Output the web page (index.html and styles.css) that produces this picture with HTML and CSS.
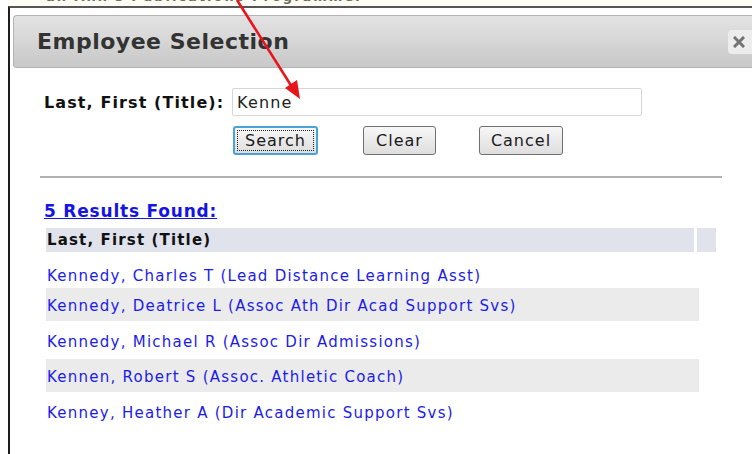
FILE: index.html
```html
<!DOCTYPE html>
<html>
<head>
<meta charset="utf-8">
<link rel="stylesheet" href="styles.css">
<title>Employee Selection</title>
</head>
<body>
<div class="backdrop-strip"><span>an Ann's Publications Programmer</span></div>
<div class="dialog">
  <div class="titlebar">
    <span class="title">Employee Selection</span>
    <span class="close" title="Close">
      <svg width="12" height="12" viewBox="0 0 12 12"><path d="M2 2 L10 10 M10 2 L2 10" stroke="#737373" stroke-width="3" stroke-linecap="square"/></svg>
    </span>
  </div>
  <div class="body">
    <div class="search-row">
      <label class="field-label" for="q">Last, First (Title):</label>
      <input id="q" class="field-input" type="text" value="Kenne">
    </div>
    <div class="button-row">
      <button class="btn btn-focus"><span class="focus-ring">Search</span></button>
      <button class="btn btn-clear">Clear</button>
      <button class="btn btn-cancel">Cancel</button>
    </div>
    <div class="divider"></div>
    <a class="result-count" href="#">5 Results Found:</a>
    <div class="results">
      <div class="results-head">
        <div class="head-cell">Last, First (Title)</div>
        <div class="head-spacer"></div>
      </div>
      <div class="row first"><a href="#">Kennedy, Charles T (Lead Distance Learning Asst)</a></div>
      <div class="row alt"><a href="#">Kennedy, Deatrice L (Assoc Ath Dir Acad Support Svs)</a></div>
      <div class="row tall"><a href="#">Kennedy, Michael R (Assoc Dir Admissions)</a></div>
      <div class="row alt"><a href="#">Kennen, Robert S (Assoc. Athletic Coach)</a></div>
      <div class="row last"><a href="#">Kenney, Heather A (Dir Academic Support Svs)</a></div>
    </div>
  </div>
</div>
<svg class="pointer" width="752" height="130" viewBox="0 0 752 130">
  <line x1="237" y1="0" x2="292" y2="87" stroke="#e8141c" stroke-width="2.6"/>
  <polygon points="300,99 285,88 297,80" fill="#e8141c"/>
</svg>
</body>
</html>
```
FILE: styles.css
```css
html, body {
  margin: 0;
  padding: 0;
  background: #fff;
  overflow: hidden;
}

body {
  width: 752px;
  height: 454px;
  position: relative;
  font-family: "DejaVu Sans", Verdana, sans-serif;
}

/* sliver of the page behind the dialog */
.backdrop-strip {
  height: 6px;
  overflow: hidden;
  margin-left: 8px;
  background: #fdfdf6;
}
.backdrop-strip span {
  display: block;
  margin-top: -10px;
  margin-left: 38px;
  font-size: 13px;
  line-height: 14px;
  color: #6d6d5a;
  font-weight: bold;
  letter-spacing: 2px;
}

.dialog {
  margin-left: 8px;
  height: 448px;
  box-sizing: border-box;
  border-left: 2px solid #1e1e1e;
  border-top: 2px solid #555;
  padding: 7px 0 0 3px;
}

.titlebar {
  height: 51px;
  border: 1px solid #b4b4b4;
  border-right: none;
  border-radius: 4px 0 0 4px;
  background: linear-gradient(#e3e3e3, #c8c8c8);
  display: flex;
  align-items: center;
  justify-content: space-between;
  padding-left: 23px;
}
.title {
  font-weight: bold;
  font-size: 22px;
  color: #333;
  letter-spacing: 0.5px;
}
.close {
  width: 24px;
  height: 24px;
  margin-top: 1px;
  background: #ececec;
  border-radius: 4px 0 0 4px;
  display: flex;
  align-items: center;
  padding-left: 5px;
  box-sizing: border-box;
}
.close svg {
  display: block;
}

.body {
  padding: 20px 0 0 31px;
}

.search-row {
  display: flex;
  align-items: center;
  height: 28px;
}
.field-label {
  font-weight: bold;
  font-size: 16px;
  letter-spacing: 1.1px;
  color: #111;
  width: 188px;
}
.field-input {
  width: 410px;
  height: 28px;
  box-sizing: border-box;
  border: 1px solid #d6d6d6;
  border-radius: 2px;
  font-family: "DejaVu Sans", Verdana, sans-serif;
  font-size: 16px;
  letter-spacing: 1.2px;
  color: #222;
  padding: 0 0 0 4px;
  margin: 0;
  outline: none;
}

.button-row {
  display: flex;
  margin: 10px 0 0 189px;
  height: 29px;
}
.btn {
  height: 29px;
  box-sizing: border-box;
  border: 1px solid #707070;
  border-radius: 3px;
  background: linear-gradient(#f7f7f7, #dedede);
  font-family: "DejaVu Sans", Verdana, sans-serif;
  font-size: 16px;
  letter-spacing: 1px;
  color: #1a1a1a;
  padding: 0;
  margin: 0;
}
.btn-focus {
  width: 85px;
  border: 2px solid #4aa3d8;
  padding: 2px;
}
.focus-ring {
  display: block;
  height: 21px;
  line-height: 19px;
  border: 1px dotted #222;
  box-sizing: border-box;
}
.btn-clear {
  width: 73px;
  margin-left: 45px;
}
.btn-cancel {
  width: 84px;
  margin-left: 43px;
}

.divider {
  height: 2px;
  background: #b2b2b2;
  width: 682px;
  margin: 21px 0 0 -4px;
}

.result-count {
  display: inline-block;
  margin-top: 23px;
  font-weight: bold;
  font-size: 17px;
  letter-spacing: 0.8px;
  color: #1414e6;
  text-decoration: underline;
  line-height: 20px;
}

.results {
  margin: 7px 0 0 2px;
  width: 670px;
}
.results-head {
  display: flex;
  gap: 3px;
  height: 24px;
}
.head-cell {
  width: 648px;
  background: #e1e3ec;
  font-weight: bold;
  font-size: 15px;
  letter-spacing: 1.15px;
  color: #111;
  line-height: 24px;
  padding-left: 1px;
  box-sizing: border-box;
}
.head-spacer {
  width: 19px;
  background: #e1e3ec;
}

.row {
  width: 653px;
  display: flex;
  align-items: center;
  padding-left: 1px;
  box-sizing: border-box;
}
.row.first {
  height: 36px;
  padding-top: 12px;
}
.row.tall {
  height: 38px;
  padding-top: 3px;
}
.row.alt {
  background: #ebebeb;
  height: 33px;
  padding-top: 2px;
}
.row.last {
  height: 40px;
  padding-top: 1px;
}
.row a {
  font-size: 15px;
  letter-spacing: 1.25px;
  color: #1c1ce8;
  text-decoration: none;
}

.pointer {
  position: absolute;
  left: 0;
  top: 0;
  pointer-events: none;
}
```
